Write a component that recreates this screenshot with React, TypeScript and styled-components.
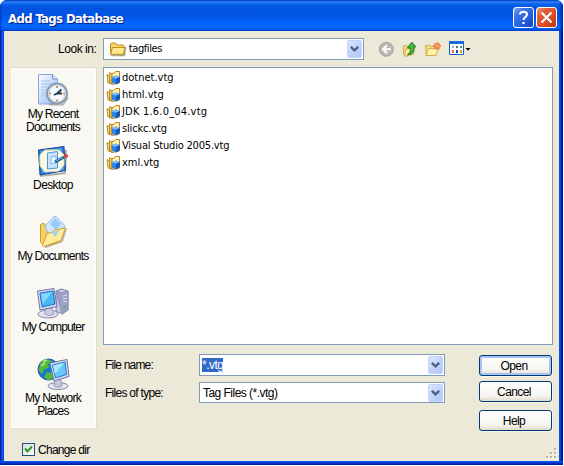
import React from 'react';
import styled, { createGlobalStyle } from 'styled-components';

const Global = createGlobalStyle`
  * { box-sizing: border-box; }
  body { margin: 0; background: #fff; overflow: hidden; font: 12px/14px "Liberation Sans", sans-serif; color: #000; }
  svg { display: block; flex: none; }
`;

const Window = styled.div`
  width: 563px; height: 465px; display: flex; flex-direction: column;
  background: #0831d9; border-radius: 7px 7px 0 0; overflow: hidden;
`;
const TitleBar = styled.header`
  height: 31px; flex: none; display: flex; align-items: center; gap: 2px; padding: 4px 6px 0 8px;
  background: linear-gradient(#0842c8 0, #2b85f8 2px, #0c62ee 4px, #0054e0 8px, #0055e5 16px, #0463fb 22px, #0567ff 27px, #005af0 29px, #0040cf 31px);
  box-shadow: inset 2px 0 2px -1px #0038c4, inset -3px 0 3px -1px #0028aa;
`;
const Title = styled.h1`
  flex: 1; margin: 0; padding-top: 2px; font: bold 13px/16px "DejaVu Sans Condensed", "DejaVu Sans", sans-serif;
  font-stretch: condensed; letter-spacing: -0.62px; color: #fff; text-shadow: 1px 1px 1px #0a1883; white-space: nowrap;
`;
const CaptionButton = styled.button<{ $close?: boolean }>`
  width: 21px; height: 21px; padding: 0; display: grid; place-items: center;
  border: 1px solid #fff; border-radius: 3px;
  background: ${p => p.$close
    ? 'linear-gradient(135deg, #f0a08a 0, #e2603c 25%, #dc4b22 65%, #b9330f 100%)'
    : 'linear-gradient(135deg, #86a8f5 0, #3d72e8 28%, #2560dc 65%, #123fba 100%)'};
`;
const Body = styled.main`
  width: 563px; height: 434px; display: flex; flex-direction: column;
  border-style: solid; border-color: transparent; border-width: 0 4px 4px;
  background:
    linear-gradient(#ece9d8, #ece9d8) padding-box,
    linear-gradient(#0a50ee 0 431px, #0831c8 432px, #001590 434px) 0 0 / 100% 100% border-box;
`;
const FrameEdges = styled.div`
  flex: 1; margin: 0 -4px; padding: 0 4px; display: flex; flex-direction: column;
  background: linear-gradient(90deg, #001ea0 0 1px, #0839dc 1px 2px, #1660f0 2px 3px, #0048e0 3px 4px, #ece9d8 4px 559px, #0050ee 559px 560px, #0048e8 560px 561px, #0020b8 561px 562px, #001288 562px);
`;
const LookRow = styled.div`
  height: 29px; display: flex; align-items: flex-start; padding: 7px 0 0 54px; flex: none;
`;
const Label = styled.label<{ $w: number; $ls?: number }>`
  width: ${p => p.$w}px; flex: none; white-space: nowrap; letter-spacing: ${p => p.$ls ?? -0.72}px;
`;
const LookLabel = styled(Label)`margin-top: 4px;`;
const Combo = styled.div<{ $w: number; $h?: number; $pad?: number }>`
  width: ${p => p.$w}px; height: ${p => p.$h ?? 22}px; flex: none; display: flex; align-items: center;
  padding: 0 1px 0 ${p => p.$pad ?? 3}px; border: 1px solid #7f9db9; background: #fff;
`;
const Value = styled.span<{ $selected?: boolean; $ls?: number }>`
  white-space: nowrap; letter-spacing: ${p => p.$ls ?? -0.53}px;
  ${p => p.$selected && 'background: #316ac5; color: #fff;'}
`;
const ListText = styled.span<{ $ls?: number }>`
  font: 11px/16px "DejaVu Sans Condensed", "DejaVu Sans", sans-serif; font-stretch: condensed;
  white-space: nowrap; letter-spacing: ${p => p.$ls ?? 0}px;
`;
const DropButton = styled.span`
  width: 15px; height: 18px; margin-left: auto; display: grid; place-items: center; border-radius: 2px;
  border: 1px solid #c3d3fd; background: linear-gradient(135deg, #dce6ff, #c0d2fb 55%, #b1c7f8);
`;
const Tools = styled.nav`display: flex; margin: 3px 0 0 14px; gap: 6px;`;
const Main = styled.div`display: flex; flex: none; height: 368px; padding: 7px 0 0 7px;`;
const Places = styled.aside`
  width: 86px; height: 362px; padding: 4px 1px 0 0; margin-right: 6px; flex: none;
  background: #f9f8f3; border: solid #e1dccb; border-width: 1px 1px 1px 0; box-shadow: inset -1px -1px #fff;
`;
const Place = styled.div`
  height: 71px; display: flex; flex-direction: column; align-items: center; padding-top: 2px;
`;
const PlaceName = styled.span<{ $ls?: number }>`
  margin-top: 2px; line-height: 13px; text-align: center; white-space: pre;
  letter-spacing: ${p => p.$ls ?? -0.7}px;
`;
const RightSide = styled.section`display: flex; flex-direction: column;`;
const Files = styled.ul`
  list-style: none; margin: 0; padding: 1px 2px; width: 450px; height: 278px;
  border: 1px solid #7f9db9; background: #fff; flex: none;
`;
const FileRow = styled.li`height: 17px; display: flex; align-items: center; gap: 1px;`;
const Form = styled.div`display: flex; justify-content: space-between; width: 449px; padding: 9px 0 0 2px;`;
const Fields = styled.div`display: flex; flex-direction: column; gap: 6px;`;
const Field = styled.div`display: flex; align-items: center;`;
const Actions = styled.div`display: flex; flex-direction: column; padding-top: 1px;`;
const Push = styled.button<{ $primary?: boolean; $gap?: number }>`
  width: 73px; height: 21px; margin: 0 0 ${p => p.$gap ?? 0}px; padding: 1px 3px 0 0;
  border: 1px solid #003c74; border-radius: 3px; color: #000;
  font: 12px/17px "Liberation Sans", sans-serif; letter-spacing: -0.6px;
  background: linear-gradient(#fff, #f5f4ef 75%, #dedacb);
  box-shadow: ${p => p.$primary ? 'inset 0 0 0 2px #a9c4f4, inset 0 -2px #7898e0, ' : ''}1px 1px #f8f6ed;
`;
const Footer = styled.footer`
  flex: 1; display: flex; justify-content: space-between; padding: 0 2px 0 18px;
`;
const CheckLine = styled.label`display: flex; gap: 3px; align-items: center; height: 13px; margin-top: 15px;`;
const CheckText = styled.span`white-space: nowrap; letter-spacing: -0.72px;`;
const Check = styled.span`
  width: 13px; height: 13px; border: 1px solid #1c5180; background: linear-gradient(135deg, #dcdcd7, #fff);
  display: grid; place-items: center;
`;
const Grip = styled.svg`align-self: flex-end; margin-bottom: 2px;`;

const Arrow = () => (
  <svg width="9" height="6" viewBox="0 0 9 6"><path d="M.8.8 4.5 4.3 8.2.8" fill="none" stroke="#4d6185" strokeWidth="2.3" /></svg>
);
const Folder = () => (
  <svg width="17" height="16" viewBox="0 0 17 16">
    <path d="M2 14.5h13.5l1-9" fill="none" stroke="#6f6a58" strokeWidth="1.4" opacity=".6" />
    <path d="M1.5 13V3l1-1h4l1.5 2h6l1 1V13z" fill="#f4d66d" stroke="#bd8e1b" />
    <path d="M1.5 13.3 3.5 6.5h12.3l-1.4 6.8z" fill="#ffea8c" stroke="#c08f1c" />
  </svg>
);
const TagFile = () => (
  <svg width="15" height="16" viewBox="0 0 15 16">
    <path d="M1 4.5 3.5 6v8L2 12.5zM3.6 2.6 6 4v10.5L4 13z" fill="#ffe696" stroke="#b98614" />
    <path d="M6 14.5V3.5L8.5 3l1-1.5h4V13L6 14.5z" fill="#fff3bd" stroke="#b98614" />
    <path d="m5.6 7.2 4.4-1.7 4 1.5v4.8L10 14.5 5.8 12.4z" fill="#2f83e4" />
    <path d="m5.6 7.2 4.4-1.7 4 1.5-4 1.8z" fill="#7dbcfa" />
    <path d="M10 8.8 14 7v4.8l-4 2.7z" fill="#1257bb" />
  </svg>
);

const Back = () => (
  <svg width="17" height="17" viewBox="0 0 17 17">
    <circle cx="8.3" cy="8.3" r="7" fill="#b9b8b1" stroke="#a4a49f" />
    <path d="M13 8.3H5m4-4-4 4 4 4" fill="none" stroke="#fff" strokeWidth="2" />
  </svg>
);
const Up = () => (
  <svg width="17" height="17" viewBox="0 0 17 17">
    <path d="M2 5.5 5.5 4l1 1.5 6-2v9L5 15.5 3 14z" fill="#efd77a" stroke="#d0ac4c" />
    <path d="m3.5 15 1.6-7 8.9-1.5-2 7z" fill="#fff2ae" stroke="#d3af4e" />
    <path d="M6.5 13.3c2.5-1 3.2-3 2.7-6.3H6.3l4.5-5.8L15 5.8h-2.2c.8 5-1.3 8.4-6.3 7.5z" fill="#42b83a" stroke="#16761b" strokeWidth=".9" />
  </svg>
);
const NewFolder = () => (
  <svg width="17" height="17" viewBox="0 0 17 17">
    <path d="M1.5 4.5 6 4l1 1.5 5-.5v9l-10 .5z" fill="#f1d978" stroke="#d4b052" />
    <path d="m2 14.5 2.5-7 10 .3-2.5 6.7z" fill="#fff1aa" stroke="#d3af4e" />
    <path d="M13 1v8M9 5h8M10.2 2.2l5.6 5.6m0-5.6-5.6 5.6" stroke="#ef713b" strokeWidth="1.3" />
    <circle cx="13" cy="5" r="1.5" fill="#ffb36c" />
  </svg>
);
const Views = () => (
  <svg width="25" height="17" viewBox="0 0 25 17">
    <path d="M2.5.5h14v13h-14z" fill="#fff" stroke="#1c61be" />
    <path d="M2 0h15v3H2z" fill="#176bdf" />
    <path d="M5 5h2v2H5z" fill="#aaa4cd" /><path d="M9 5h2v2H9z" fill="#4f60c4" /><path d="M13 5h2v2h-2z" fill="#3f9b48" />
    <path d="M5 9h2v3H5z" fill="#e9704c" /><path d="M9 9h2v3H9z" fill="#233dcc" /><path d="M13 9h2v3h-2z" fill="#d3a22c" />
    <path d="M18.5 7h5L21 9.8z" fill="#000" />
  </svg>
);

const RecentIcon = () => (
  <svg width="32" height="32" viewBox="0 0 32 32">
    <defs><linearGradient id="page" x2="1" y2="1"><stop stopColor="#fff" /><stop offset="1" stopColor="#8fb6f6" /></linearGradient></defs>
    <path d="M1.5.5h14L20.5 5v25h-19z" fill="url(#page)" stroke="#8aa6dc" />
    <path d="M15.5.5V5h5" fill="#dceaff" stroke="#7390ca" />
    <path d="M4 7h9M4 10h11M4 13h8M4 16h6M4 19h6M4 22h6" stroke="#a5c4f0" />
    <path d="M12 30.5h14l5-7" fill="none" stroke="#858589" strokeWidth="2" opacity=".55" />
    <circle cx="20" cy="19.5" r="10" fill="#dcecf6" stroke="#8b9aac" strokeWidth="2" />
    <circle cx="20" cy="19.5" r="8" fill="#f5fcff" stroke="#c6def0" />
    <path d="M20 12v2M20 25.5v2M12 19.5h2M26 19.5h2" stroke="#ef874b" strokeWidth="2" />
    <path d="m17 21 3-1.5 4.5-4M20 19.5h5" fill="none" stroke="#233950" strokeWidth="1.8" />
  </svg>
);
const DesktopIcon = () => (
  <svg width="32" height="32" viewBox="0 0 32 32">
    <path d="M3 31 28 28 29 5" fill="none" stroke="#777" strokeWidth="2" opacity=".55" />
    <path d="M1.5 5 27 1.5l1.5 24L3 30z" fill="#2874d4" stroke="#164b9f" />
    <path d="m3 6 22-3 2 22-22 3z" fill="#4ba1ee" />
    <path d="M8 5h14l5 5v10l-5 6-14 1-5-6V10z" fill="#fff9dc" stroke="#d8deb9" />
    <path d="m10.5 8 10-1.5V23l-10 1z" fill="#c8e3ff" stroke="#4694e3" />
    <path d="m14 12 5-1v7l-5 1z" fill="#edf8ff" stroke="#7ab5ef" />
    <path d="m18 17 9-5" stroke="#1f5b90" strokeWidth="3" /><path d="m19 16 7-4" stroke="#72c5e5" />
    <circle cx="29" cy="11" r="2" fill="#d54035" />
  </svg>
);
const DocumentsIcon = () => (
  <svg width="32" height="32" viewBox="0 0 32 32">
    <path d="m8 31.3 17-6 4-13" fill="none" stroke="#777" strokeWidth="2" opacity=".5" />
    <path d="m3.5 8.5 3-1.5 3 3 8-3 8 4-3 15-15 4-4-4z" fill="#f5d060" stroke="#cf9a30" />
    <path d="m8 10 9-9.5h2L28 10l-6 11-9 1z" fill="#cfe8ff" stroke="#8ebbe8" />
    <path d="m13 8 5-6 6 6-5 6z" fill="#7fbff6" opacity=".7" />
    <path d="M5.5 29.5 10 17.5l6-1.5 1.5-2L28.5 12l-4.5 12.5-17 6z" fill="#ffeb9c" stroke="#d29d31" />
    <path d="m14 16.5 9-2.5-4.5 7z" fill="#a5d2f2" />
  </svg>
);
const ComputerIcon = () => (
  <svg width="34" height="32" viewBox="0 0 34 32">
    <path d="m20 4 5-2 7 2v19l-6 4-6-3z" fill="#c6c9e3" stroke="#8285ae" />
    <path d="m20 4 6 2 6-2v19l-6 4z" fill="#9c9fc8" stroke="#8d91bb" />
    <path d="m27 9 4-1m-4 4 4-1m-4 4 4-1" stroke="#dfe1f4" />
    <path d="m27 21 3-1.5" stroke="#58b55c" strokeWidth="2" />
    <ellipse cx="12" cy="27" rx="10" ry="4" fill="#e4e4f1" stroke="#8588a8" />
    <path d="m9 22 7-1 2 6c-3 2-6 2-9 0z" fill="#c9cbe1" stroke="#999db9" />
    <path d="M1.5 4 18 1.5l3 18L4 23z" fill="#d8daf0" stroke="#7378a5" />
    <path d="m4 6 13-2 2 13-13 3z" fill="#4ab8f7" stroke="#286fc3" />
    <path d="m5 7 11-2-9 12z" fill="#9ee2ff" opacity=".7" />
  </svg>
);
const NetworkIcon = () => (
  <svg width="34" height="32" viewBox="0 0 34 32">
    <circle cx="12.5" cy="11.5" r="10.5" fill="#1477d5" stroke="#235ca1" />
    <path d="M2.5 12 5 4l7-2.5 4 2-4 3 1 3-5 2-2 5zM11 14l5 1 3 5-7 2-4-3z" fill="#55b83e" />
    <path d="m7 3.5 4-1.5M5 7.5l4-2" stroke="#a9e36d" strokeWidth="2" />
    <ellipse cx="22" cy="28" rx="10" ry="3.5" fill="#e6e6f2" stroke="#8488a8" />
    <path d="m19 21 6 1 1 6c-3 2-6 1-8 0z" fill="#c6c9df" stroke="#9196b5" />
    <path d="m14 5 17-3.5 2 17-15 4.5z" fill="#d8dbef" stroke="#7075a2" />
    <path d="M16.5 7 29 4l1.5 12.5-11 3.5z" fill="#66c8fa" stroke="#2879be" />
    <path d="m17 7.5 11-2.7-9 11.5z" fill="#a9e6ff" />
  </svg>
);

const places = [
  { name: 'My Recent\nDocuments', icon: <RecentIcon />, spacing: -0.75 },
  { name: 'Desktop', icon: <DesktopIcon />, spacing: -0.6 },
  { name: 'My Documents', icon: <DocumentsIcon />, spacing: -0.75 },
  { name: 'My Computer', icon: <ComputerIcon />, spacing: -0.85 },
  { name: 'My Network\nPlaces', icon: <NetworkIcon />, spacing: -0.75 },
];
const files = [
  { name: 'dotnet.vtg', spacing: 0 },
  { name: 'html.vtg', spacing: 0 },
  { name: 'JDK 1.6.0_04.vtg', spacing: 0.2 },
  { name: 'slickc.vtg', spacing: -0.15 },
  { name: 'Visual Studio 2005.vtg', spacing: -0.2 },
  { name: 'xml.vtg', spacing: 0 },
];

export default function App() {
  return (
    <>
      <Global />
      <Window>
        <TitleBar>
          <Title>Add Tags Database</Title>
          <CaptionButton aria-label="Context help">
            <svg width="13" height="15" viewBox="0 0 13 15"><path d="M3 4.5C3 .8 10 .8 10 4.5c0 2.5-3.5 2.5-3.5 5.5" fill="none" stroke="#fff" strokeWidth="2" /><path d="M5.4 12h2.2v2H5.4z" fill="#fff" /></svg>
          </CaptionButton>
          <CaptionButton $close aria-label="Close">
            <svg width="13" height="13" viewBox="0 0 13 13"><path d="m1.5 1.5 10 10m0-10-10 10" stroke="#fff" strokeWidth="2.2" /></svg>
          </CaptionButton>
        </TitleBar>
        <Body>
          <FrameEdges>
            <LookRow>
              <LookLabel $w={45} $ls={-0.45}>Look in:</LookLabel>
              <Combo $w={261} $pad={5}>
                <Folder /><ListText $ls={-0.4}>&nbsp;tagfiles</ListText>
                <DropButton><Arrow /></DropButton>
              </Combo>
              <Tools><Back /><Up /><NewFolder /><Views /></Tools>
            </LookRow>
            <Main>
              <Places>
                {places.map(p => <Place key={p.name}>{p.icon}<PlaceName $ls={p.spacing}>{p.name}</PlaceName></Place>)}
              </Places>
              <RightSide>
                <Files>
                  {files.map(f => <FileRow key={f.name}><TagFile /><ListText $ls={f.spacing}>{f.name}</ListText></FileRow>)}
                </Files>
                <Form>
                  <Fields>
                    <Field><Label $w={94} $ls={-0.8}>File name:</Label>
                      <Combo $w={246} $pad={2}><Value $selected>*.vtg</Value><DropButton><Arrow /></DropButton></Combo></Field>
                    <Field><Label $w={94}>Files of type:</Label>
                      <Combo $w={246} $h={21}><Value>Tag Files (*.vtg)</Value><DropButton><Arrow /></DropButton></Combo></Field>
                  </Fields>
                  <Actions>
                    <Push $primary $gap={5}>Open</Push>
                    <Push $gap={8}>Cancel</Push>
                    <Push>Help</Push>
                  </Actions>
                </Form>
              </RightSide>
            </Main>
            <Footer>
              <CheckLine>
                <Check><svg width="9" height="9" viewBox="0 0 9 9"><path d="m1 3.5 2.5 3L8 1.5" fill="none" stroke="#21a121" strokeWidth="2" /></svg></Check>
                <CheckText>Change dir</CheckText>
              </CheckLine>
              <Grip width="11" height="11" viewBox="0 0 11 11">
                <path d="M9 1h2v2H9zM5 5h2v2H5zM9 5h2v2H9zM1 9h2v2H1zM5 9h2v2H5zM9 9h2v2H9z" fill="#fff" />
                <path d="M8 0h2v2H8zM4 4h2v2H4zM8 4h2v2H8zM0 8h2v2H0zM4 8h2v2H4zM8 8h2v2H8z" fill="#b8b4a3" />
              </Grip>
            </Footer>
          </FrameEdges>
        </Body>
      </Window>
    </>
  );
}
